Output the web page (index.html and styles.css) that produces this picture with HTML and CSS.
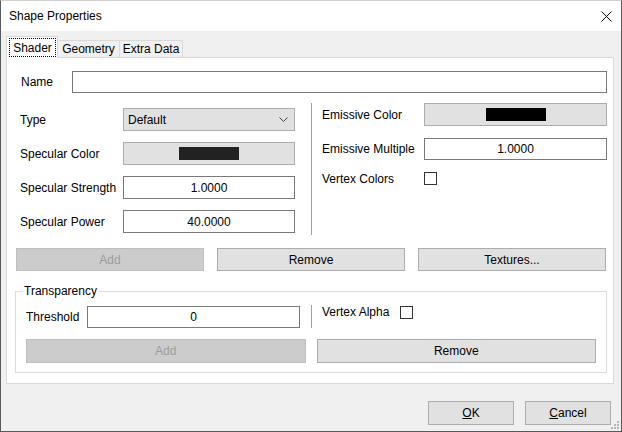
FILE: index.html
```html
<!DOCTYPE html>
<html lang="en">
<head>
  <meta charset="UTF-8">
  <title>Shape Properties</title>
  <link rel="stylesheet" href="styles.css">
</head>
<body>

<div class="window">
  <div class="titlebar">
    <span>Shape Properties</span>
    <svg class="close" width="11" height="11" viewBox="0 0 11 11">
      <path d="M0.5 0.5 L10.5 10.5 M10.5 0.5 L0.5 10.5" stroke="#000" stroke-width="1" fill="none"/>
    </svg>
  </div>

  <div class="content">
    <div class="tabs">
      <div class="tab active"><span class="focus">Shader</span></div>
      <div class="tab geometry">Geometry</div>
      <div class="tab extra">Extra Data</div>
    </div>

    <div class="panel">
      <div class="name-row">
        <label class="name-label">Name</label>
        <input class="field name-field" type="text" value="">
      </div>

      <div class="props">
        <div class="col left">
          <div class="row">
            <label>Type</label>
            <div class="combo">Default
              <svg width="9" height="5" viewBox="0 0 9 5"><path d="M0.5 0.5 L4.5 4.5 L8.5 0.5" stroke="#444" fill="none"/></svg>
            </div>
          </div>
          <div class="row">
            <label>Specular Color</label>
            <button class="btn color-btn"><span class="swatch spec"></span></button>
          </div>
          <div class="row">
            <label>Specular Strength</label>
            <input class="field num" type="text" value="1.0000">
          </div>
          <div class="row">
            <label>Specular Power</label>
            <input class="field num" type="text" value="40.0000">
          </div>
        </div>
        <div class="vsep"></div>
        <div class="col right">
          <div class="row">
            <label>Emissive Color</label>
            <button class="btn color-btn"><span class="swatch emis"></span></button>
          </div>
          <div class="row">
            <label>Emissive Multiple</label>
            <input class="field num" type="text" value="1.0000">
          </div>
          <div class="row check-row">
            <label>Vertex Colors</label>
            <span class="check"></span>
          </div>
        </div>
      </div>

      <div class="btn-row three">
        <button class="btn" disabled>Add</button>
        <button class="btn">Remove</button>
        <button class="btn">Textures...</button>
      </div>

      <fieldset class="group">
        <legend>Transparency</legend>
        <div class="thresh-row">
          <label class="thresh-label">Threshold</label>
          <input class="field num thresh" type="text" value="0">
          <div class="vsep short"></div>
          <div class="alpha">
            <label>Vertex Alpha</label>
            <span class="check"></span>
          </div>
        </div>
        <div class="btn-row two">
          <button class="btn" disabled>Add</button>
          <button class="btn">Remove</button>
        </div>
      </fieldset>
    </div>

    <div class="footer">
      <button class="btn"><u>O</u>K</button>
      <button class="btn"><u>C</u>ancel</button>
    </div>
  </div>

  <svg class="grip" width="10" height="10" viewBox="0 0 10 10">
    <rect x="7" y="1" width="2" height="2" fill="#b4b4b4"/>
    <rect x="4" y="4" width="2" height="2" fill="#b4b4b4"/>
    <rect x="7" y="4" width="2" height="2" fill="#b4b4b4"/>
    <rect x="1" y="7" width="2" height="2" fill="#b4b4b4"/>
    <rect x="4" y="7" width="2" height="2" fill="#b4b4b4"/>
    <rect x="7" y="7" width="2" height="2" fill="#b4b4b4"/>
  </svg>
</div>

</body>
</html>
```

FILE: styles.css
```css
* { box-sizing: border-box; }
body { margin: 0; font-family: "Liberation Sans", Arial, sans-serif; font-size: 12px; color: #000; }

.window { width: 622px; height: 432px; border: 1px solid #595959; border-top-color: #cfcfcf; background: #f0f0f0; display: flex; flex-direction: column; position: relative; }
.titlebar { height: 30px; background: #fff; display: flex; align-items: center; justify-content: space-between; padding: 0 9px 0 8px; }
.close { display: block; }

.content { padding: 5px 6px 0 5px; display: flex; flex-direction: column; }

.tabs { display: flex; align-items: flex-end; height: 21px; }
.tab { height: 17px; border: 1px solid #d9d9d9; border-left: none; border-bottom: none; display: flex; align-items: center; justify-content: center; line-height: 14px; }
.tab.active { width: 52px; height: 22px; border-left: 1px solid #d9d9d9; background: #fff; margin-bottom: -1px; position: relative; z-index: 1; align-items: flex-start; justify-content: flex-start; padding: 1px 0 0 2px; }
.tab.geometry { width: 62px; }
.tab.extra { width: 63px; }
.focus { width: 47px; height: 19px; border: 1px dotted #000; display: flex; align-items: center; justify-content: center; }

.panel { width: 608px; height: 327px; background: #fff; border: 1px solid #d9d9d9; padding: 13px 7px 0 9px; display: flex; flex-direction: column; }

.field { height: 22px; border: 1px solid #7a7a7a; background: #fff; font: inherit; padding: 0 3px; margin: 0; outline: none; }
.num { text-align: center; }

.name-row { display: flex; align-items: center; height: 22px; }
.name-label { width: 56px; padding-left: 5px; }
.name-field { flex: 1; margin-right: -1px; }

.props { display: grid; grid-template-columns: 295px 1px 1fr; height: 132px; margin-top: 10px; }
.col { display: flex; flex-direction: column; gap: 11px; }
.col.left { padding-top: 5px; }
.row { display: flex; align-items: center; height: 23px; }
.left .row label { width: 107px; padding-left: 4px; }
.left .row .field, .left .row .combo, .left .row .btn { width: 172px; height: 23px; }
.right .row label { width: 112px; padding-left: 10px; }
.right .row .field, .right .row .btn { width: 183px; height: 23px; }
.right .row .field { height: 22px; }
.check-row { height: 15px; }

.vsep { background: #a0a0a0; width: 1px; }

.combo { background: #e1e1e1; border: 1px solid #adadad; display: flex; align-items: center; justify-content: space-between; padding: 0 6px 0 4px; }

.btn { background: #e1e1e1; border: 1px solid #adadad; font: inherit; color: #000; padding: 0; margin: 0; border-radius: 0; display: flex; align-items: center; justify-content: center; }
.btn:disabled { background: #cccccc; border-color: #bfbfbf; color: #9d9d9d; }

.swatch { display: block; width: 60px; height: 13px; }
.swatch.spec { background: #222; }
.swatch.emis { background: #000; }

.check { display: block; width: 13px; height: 13px; border: 1px solid #333; background: #fff; }

.btn-row { display: grid; }
.btn-row .btn { height: 23px; }
.btn-row.three { grid-template-columns: 1fr 1fr 1fr; gap: 13px; margin-top: 13px; }
.btn-row.two { grid-template-columns: 1fr 1fr; gap: 11px; margin-top: 11px; }
.btn-row.two .btn { height: 24px; }

.group { margin: 13px -1px 0 -1px; padding: 0 10px 9px; border: 1px solid #dcdcdc; min-width: 0; }
.group legend { padding: 0 1px; margin-left: -3px; line-height: 14px; }

.thresh-row { display: flex; align-items: center; height: 23px; margin-top: 7px; }
.thresh-label { width: 61px; }
.thresh { width: 213px; }
.vsep.short { height: 23px; margin-left: 11px; }
.alpha { display: flex; align-items: center; align-self: flex-start; margin-left: 10px; margin-top: 1px; }
.alpha label { width: 78px; line-height: 13px; }

.footer { display: flex; justify-content: flex-end; gap: 11px; padding: 17px 4px 0 0; }
.footer .btn { width: 86px; height: 24px; }

.grip { position: absolute; right: 1px; bottom: 1px; }
```
